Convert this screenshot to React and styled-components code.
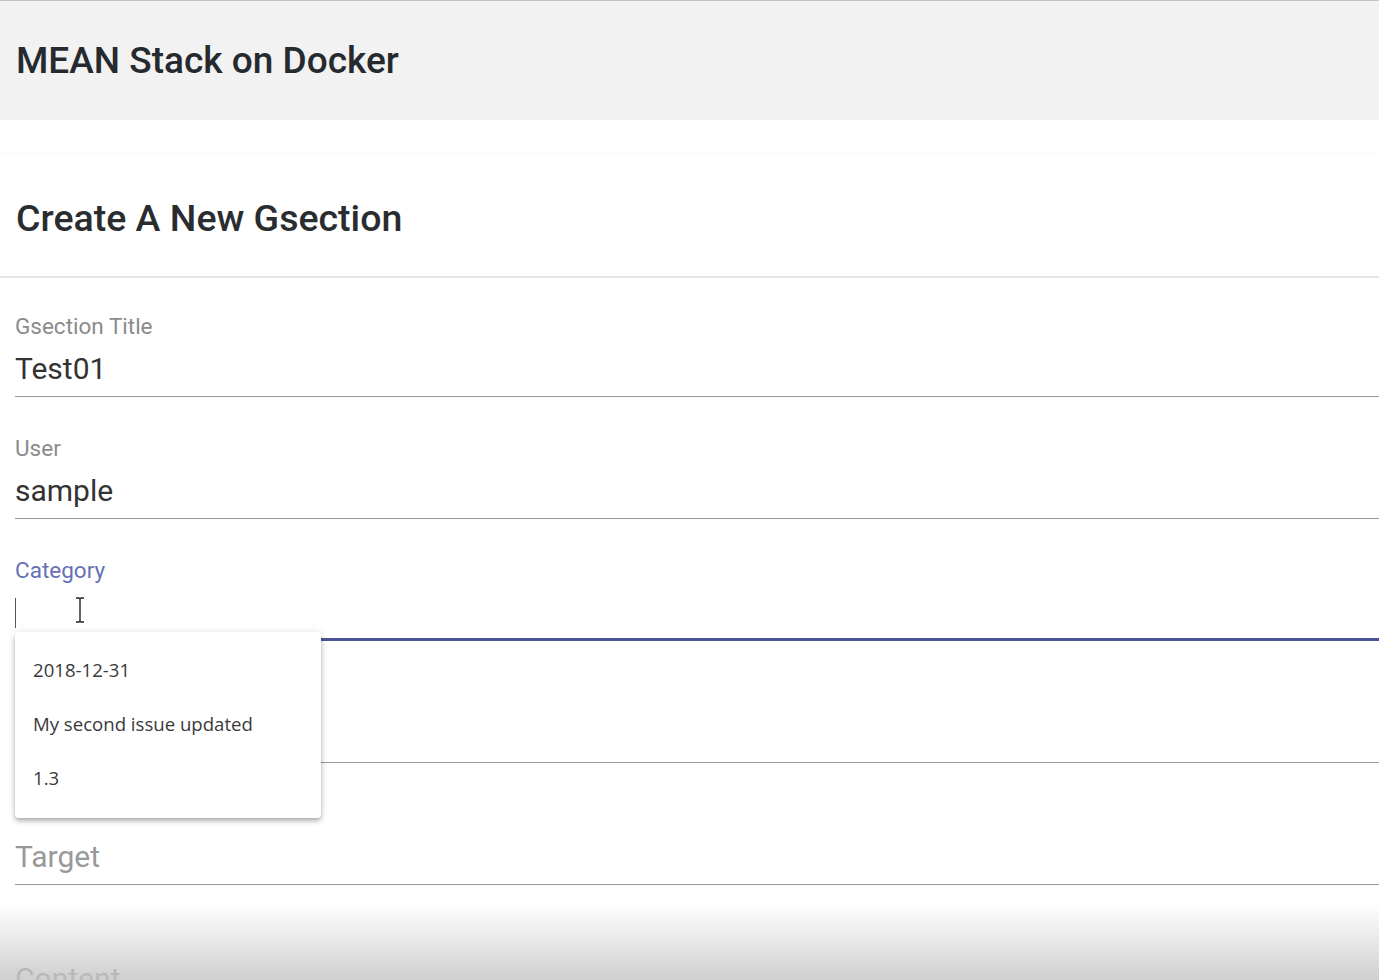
import styled, { createGlobalStyle } from "styled-components";

const GlobalStyle = createGlobalStyle`
  html, body {
    margin: 0;
    padding: 0;
    background: #ffffff;
    font-family: Roboto, "Liberation Sans", sans-serif;
    overflow: hidden;
  }
`;

const Toolbar = styled.header`
  height: 119px;
  border-top: 1px solid #c4c4c4;
  background: #f2f2f2;
  display: flex;
  align-items: center;
  padding: 0 16px;
`;

const AppTitle = styled.h1`
  margin: 0;
  font-size: 37px;
  font-weight: 500;
  color: #262a2e;
`;

const Card = styled.section`
  margin-top: 34px;
  box-shadow: 0 -1px 2px rgba(0, 0, 0, 0.03);
`;

const CardHeader = styled.div`
  height: 122px;
  display: flex;
  align-items: center;
  padding: 0 16px;
  border-bottom: 2px solid #e6e6e6;
`;

const CardTitle = styled.h2`
  margin: 0;
  margin-top: 6px;
  font-size: 37.5px;
  font-weight: 500;
  color: #2a2d30;
`;

const Form = styled.form`
  padding-left: 15px;
`;

const Field = styled.div`
  position: relative;
  height: ${(p) => (p.$first ? 119 : 122)}px;
  box-sizing: border-box;
  padding-top: ${(p) => (p.$first ? 36 : 39)}px;
  border-bottom: ${(p) => (p.$focused ? "3px solid #4b5398" : "1px solid #999999")};
  display: flex;
  flex-direction: column;
`;

const Label = styled.label`
  height: 24px;
  line-height: 24px;
  font-size: 22.5px;
  color: ${(p) => (p.$focused ? "#6670b6" : "#8b8b8b")};
  visibility: ${(p) => (p.$hide ? "hidden" : "visible")};
`;

const Value = styled.div`
  margin-top: 13px;
  height: 36px;
  line-height: 36px;
  font-size: 30px;
  color: ${(p) => (p.$muted ? "#999999" : "#333333")};
  display: flex;
  align-items: center;
`;

const Caret = styled.span`
  width: 1px;
  height: 30px;
  background: #555555;
`;

const Cursor = styled.svg`
  margin-left: 59px;
  margin-top: -6px;
`;

const Panel = styled.ul`
  position: absolute;
  left: 0;
  top: 113px;
  width: 306px;
  margin: 0;
  padding: 11px 0 13px;
  list-style: none;
  background: #ffffff;
  border-radius: 4px;
  box-shadow: 0 2px 4px -1px rgba(0, 0, 0, 0.2), 0 4px 5px 0 rgba(0, 0, 0, 0.14),
    0 1px 10px 0 rgba(0, 0, 0, 0.12);
  z-index: 2;
`;

const Option = styled.li`
  height: 54px;
  line-height: 54px;
  padding-left: 18px;
  font-family: "Open Sans", Roboto, sans-serif;
  font-size: 18.6px;
  color: #3a3a3a;
`;

const BottomFade = styled.div`
  position: fixed;
  left: 0;
  right: 0;
  bottom: 0;
  height: 76px;
  background: linear-gradient(rgba(255, 255, 255, 0), rgba(195, 195, 195, 0.8));
  pointer-events: none;
  z-index: 3;
`;

const options = ["2018-12-31", "My second issue updated", "1.3"];

export default function App() {
  return (
    <>
      <GlobalStyle />
      <Toolbar>
        <AppTitle>MEAN Stack on Docker</AppTitle>
      </Toolbar>
      <Card>
        <CardHeader>
          <CardTitle>Create A New Gsection</CardTitle>
        </CardHeader>
        <Form>
          <Field $first>
            <Label>Gsection Title</Label>
            <Value>Test01</Value>
          </Field>
          <Field>
            <Label>User</Label>
            <Value>sample</Value>
          </Field>
          <Field $focused>
            <Label $focused>Category</Label>
            <Value>
              <Caret />
              <Cursor width="10" height="26" viewBox="0 0 10 26">
                <path
                  d="M1 1h3l1 1 1-1h3M5 2v22M1 25h3l1-1 1 1h3"
                  fill="none"
                  stroke="#222"
                  strokeWidth="1.4"
                />
              </Cursor>
            </Value>
            <Panel>
              {options.map((o) => (
                <Option key={o}>{o}</Option>
              ))}
            </Panel>
          </Field>
          <Field>
            <Label $hide>Description</Label>
            <Value />
          </Field>
          <Field>
            <Label $hide>Target</Label>
            <Value $muted>Target</Value>
          </Field>
          <Field>
            <Label $hide>Content</Label>
            <Value $muted>Content</Value>
          </Field>
        </Form>
      </Card>
      <BottomFade />
    </>
  );
}
